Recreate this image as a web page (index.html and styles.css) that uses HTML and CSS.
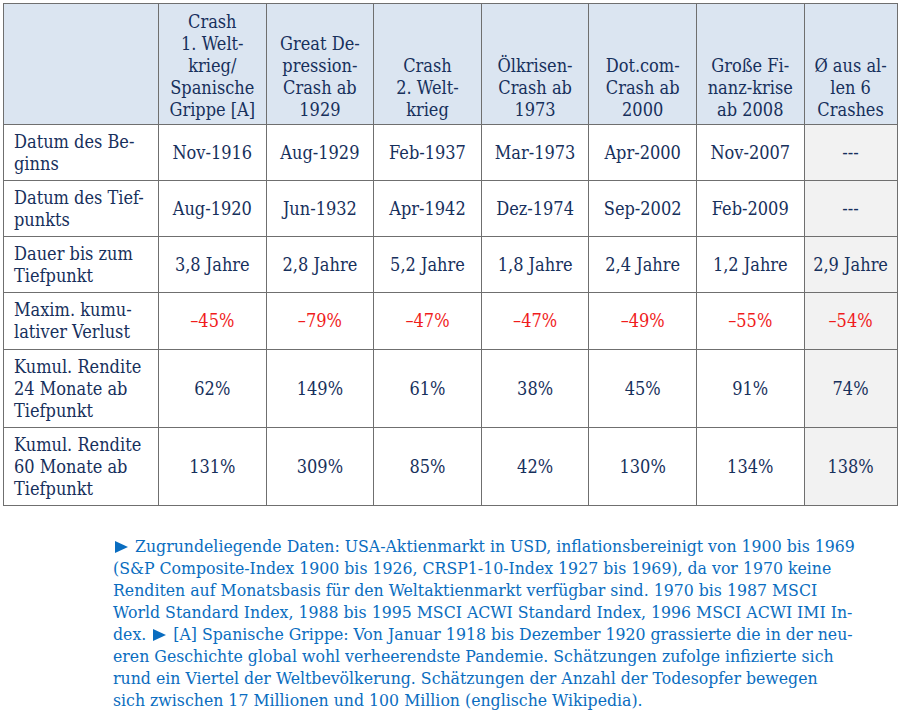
FILE: index.html
```html
<!DOCTYPE html>
<html lang="de">
<head>
<meta charset="utf-8">
<title>Crashes</title>
<link rel="stylesheet" href="styles.css">
</head>
<body>
<div class="page">
  <table class="crash">
    <colgroup>
      <col class="c-label">
      <col class="c-val"><col class="c-val"><col class="c-val"><col class="c-val"><col class="c-val"><col class="c-val">
      <col class="c-avg">
    </colgroup>
    <thead>
      <tr class="r-head">
        <th></th>
        <th>Crash<br>1. Welt-<br>krieg/<br>Spanische<br>Grippe [A]</th>
        <th>Great De-<br>pression-<br>Crash ab<br>1929</th>
        <th>Crash<br>2. Welt-<br>krieg</th>
        <th>Ölkrisen-<br>Crash ab<br>1973</th>
        <th>Dot.com-<br>Crash ab<br>2000</th>
        <th>Große Fi-<br>nanz-krise<br>ab 2008</th>
        <th>Ø aus al-<br>len 6<br>Crashes</th>
      </tr>
    </thead>
    <tbody>
      <tr class="r-short">
        <td class="lbl">Datum des Be-<br>ginns</td>
        <td>Nov-1916</td><td>Aug-1929</td><td>Feb-1937</td><td>Mar-1973</td><td>Apr-2000</td><td>Nov-2007</td><td class="avg">---</td>
      </tr>
      <tr class="r-short">
        <td class="lbl">Datum des Tief-<br>punkts</td>
        <td>Aug-1920</td><td>Jun-1932</td><td>Apr-1942</td><td>Dez-1974</td><td>Sep-2002</td><td>Feb-2009</td><td class="avg">---</td>
      </tr>
      <tr class="r-short">
        <td class="lbl">Dauer bis zum<br>Tiefpunkt</td>
        <td>3,8 Jahre</td><td>2,8 Jahre</td><td>5,2 Jahre</td><td>1,8 Jahre</td><td>2,4 Jahre</td><td>1,2 Jahre</td><td class="avg">2,9 Jahre</td>
      </tr>
      <tr class="r-short2 neg">
        <td class="lbl">Maxim. kumu-<br>lativer Verlust</td>
        <td>–45%</td><td>–79%</td><td>–47%</td><td>–47%</td><td>–49%</td><td>–55%</td><td class="avg">–54%</td>
      </tr>
      <tr class="r-tall">
        <td class="lbl">Kumul. Rendite<br>24 Monate ab<br>Tiefpunkt</td>
        <td>62%</td><td>149%</td><td>61%</td><td>38%</td><td>45%</td><td>91%</td><td class="avg">74%</td>
      </tr>
      <tr class="r-tall">
        <td class="lbl">Kumul. Rendite<br>60 Monate ab<br>Tiefpunkt</td>
        <td>131%</td><td>309%</td><td>85%</td><td>42%</td><td>130%</td><td>134%</td><td class="avg">138%</td>
      </tr>
    </tbody>
  </table>

  <p class="note"><span class="tri" aria-label="►"></span> Zugrundeliegende Daten: USA-Aktienmarkt in USD, inflationsbereinigt von 1900 bis 1969<br>(S&amp;P Composite-Index 1900 bis 1926, CRSP1-10-Index 1927 bis 1969), da vor 1970 keine<br>Renditen auf Monatsbasis für den Weltaktienmarkt verfügbar sind. 1970 bis 1987 MSCI<br>World Standard Index, 1988 bis 1995 MSCI ACWI Standard Index, 1996 MSCI ACWI IMI In-<br>dex. <span class="tri" aria-label="►"></span> [A] Spanische Grippe: Von Januar 1918 bis Dezember 1920 grassierte die in der neu-<br>eren Geschichte global wohl verheerendste Pandemie. Schätzungen zufolge infizierte sich<br>rund ein Viertel der Weltbevölkerung. Schätzungen der Anzahl der Todesopfer bewegen<br>sich zwischen 17 Millionen und 100 Million (englische Wikipedia).</p>
</div>
</body>
</html>
```

FILE: styles.css
```css
html, body {
  margin: 0;
  padding: 0;
  background: #ffffff;
}

.page {
  padding: 3px 3px 0 3px;
  font-family: "DejaVu Serif Condensed", "DejaVu Serif", serif;
  font-size: 18px;
  line-height: 22px;
  color: #17305c;
}

.crash {
  width: 894px;
  border-collapse: collapse;
  table-layout: fixed;
}

.c-label { width: 155px; }
.c-val { width: 107.6px; }
.c-avg { width: 93px; }

.crash th,
.crash td {
  border: 1px solid #6f6f6f;
  padding: 0 4px;
  text-align: center;
  vertical-align: middle;
  white-space: nowrap;
  font-weight: normal;
}

.crash th {
  background: #dbe5f1;
  vertical-align: bottom;
  padding-bottom: 3px;
}

.r-head { height: 121px; }
.r-short { height: 56px; }
.r-short2 { height: 57px; }
.r-tall { height: 78px; }

.crash td.lbl {
  text-align: left;
  padding-left: 10px;
}

.crash td.avg {
  background: #f2f2f2;
}

.neg td:not(.lbl) {
  color: #f01c1c;
}

.note {
  margin: 29px 0 0 110px;
  color: #0a6dc0;
  font-size: 17.5px;
  white-space: nowrap;
}

.tri {
  display: inline-block;
  width: 0;
  height: 0;
  border-left: 13px solid #0a6dc0;
  border-top: 6.5px solid transparent;
  border-bottom: 6.5px solid transparent;
  margin-left: 2px;
  margin-right: 2px;
  vertical-align: -1px;
}
```
